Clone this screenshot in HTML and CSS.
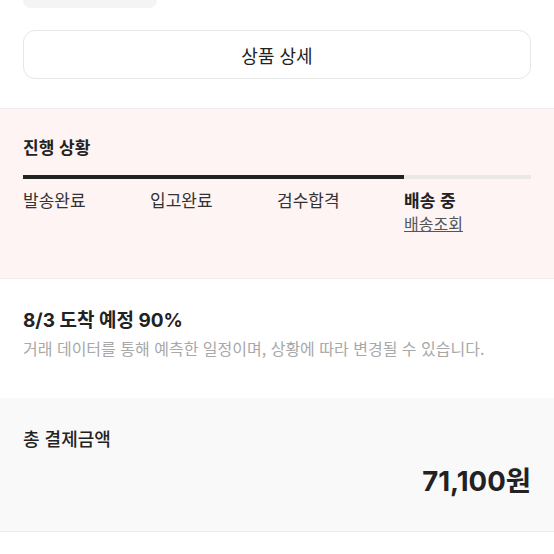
FILE: index.html
```html
<!DOCTYPE html>
<html lang="ko">
<head>
<meta charset="utf-8">
<link rel="stylesheet" href="styles.css">
</head>
<body>
<div class="page">
  <div class="chip-row"><div class="chip"></div></div>
  <div class="btn-section">
    <div class="detail-btn">상품 상세</div>
  </div>
  <section class="progress">
    <h2 class="title">진행 상황</h2>
    <div class="bar"><div class="bar-fill"></div></div>
    <div class="steps">
      <div class="step">발송완료</div>
      <div class="step">입고완료</div>
      <div class="step">검수합격</div>
      <div class="step active">배송 중<a class="track">배송조회</a></div>
    </div>
  </section>
  <section class="eta">
    <div class="eta-title">8/3 도착 예정 90%</div>
    <div class="eta-desc">거래 데이터를 통해 예측한 일정이며, 상황에 따라 변경될 수 있습니다.</div>
  </section>
  <section class="total">
    <div class="total-label">총 결제금액</div>
    <div class="total-price">71,100원</div>
  </section>
</div>
</body>
</html>
```
FILE: styles.css
```css
* { box-sizing: border-box; }
html, body { margin: 0; padding: 0; background: #fff; }
body { font-family: "Inter", "Noto Sans CJK KR", sans-serif; color: #222; }
.page { width: 554px; }
.chip-row { padding: 0 23px; }
.chip { width: 134px; height: 8px; background: #f4f4f4; border-radius: 0 0 8px 8px; }
.btn-section { padding: 22px 23px 29px; }
.detail-btn {
  height: 49px; border: 1px solid #e6e6e6; border-radius: 12px;
  display: flex; align-items: center; justify-content: center;
  font-size: 18px; color: #222; font-family: "Noto Sans CJK KR", sans-serif;
}
.progress {
  background: #fdf4f3; border-top: 1px solid #ececec; border-bottom: 1px solid #f0eaea;
  padding: 27px 23px 0; height: 171px;
}
.title { margin: 0; font-size: 17px; font-weight: 700; line-height: 22px; font-family: "Noto Sans CJK KR", sans-serif; color: #222; }
.bar { margin-top: 17px; height: 4px; background: #ebe7e7; display: flex; }
.bar-fill { width: 75%; background: #222; }
.steps { display: grid; grid-template-columns: repeat(4, 1fr); margin-top: 10px; }
.step { font-size: 17px; line-height: 22px; color: #333; font-family: "Noto Sans CJK KR", sans-serif; display: flex; flex-direction: column; align-items: flex-start; }
.step.active { font-weight: 700; color: #222; }
.track { font-size: 16px; font-weight: 400; color: #555; text-decoration: underline; line-height: 22px; margin-top: 1px; }
.eta { padding: 30px 23px 0; height: 119px; }
.eta-title { font-size: 19px; font-weight: 700; line-height: 24px; color: #222; }
.eta-desc { font-size: 16px; line-height: 20px; color: #a8a8a8; margin-top: 5px; font-family: "Noto Sans CJK KR", sans-serif; white-space: nowrap; }
.total { background: #f9f9f9; border-bottom: 1px solid #ebebeb; padding: 29px 23px 0; height: 134px; }
.total-label { font-size: 18px; font-weight: 500; line-height: 22px; color: #222; font-family: "Noto Sans CJK KR", sans-serif; }
.total-price { text-align: right; font-size: 27.5px; font-weight: 700; line-height: 34px; margin-top: 15px; color: #222; }
```
